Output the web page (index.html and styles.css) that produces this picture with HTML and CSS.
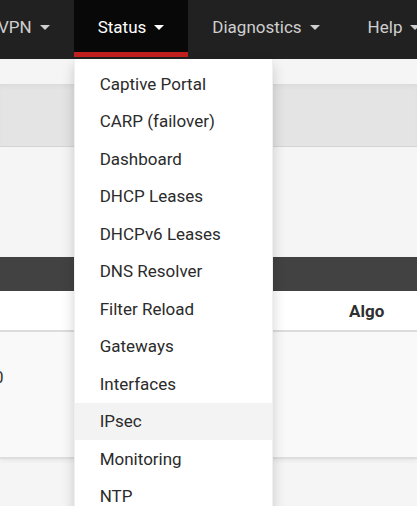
FILE: index.html
```html
<!DOCTYPE html>
<html lang="en">
<head>
<meta charset="utf-8">
<title>Status</title>
<link rel="stylesheet" href="styles.css">
</head>
<body>
<nav class="navbar">
  <ul class="nav">
    <li class="nav-item"><a class="nav-link">VPN<span class="caret"></span></a></li>
    <li class="nav-item active">
      <a class="nav-link">Status<span class="caret"></span></a>
      <ul class="dropdown">
        <li><a>Captive Portal</a></li>
        <li><a>CARP (failover)</a></li>
        <li><a>Dashboard</a></li>
        <li><a>DHCP Leases</a></li>
        <li><a>DHCPv6 Leases</a></li>
        <li><a>DNS Resolver</a></li>
        <li><a>Filter Reload</a></li>
        <li><a>Gateways</a></li>
        <li><a>Interfaces</a></li>
        <li class="hover"><a>IPsec</a></li>
        <li><a>Monitoring</a></li>
        <li><a>NTP</a></li>
      </ul>
    </li>
    <li class="nav-item"><a class="nav-link">Diagnostics<span class="caret"></span></a></li>
    <li class="nav-item"><a class="nav-link">Help<span class="caret"></span></a></li>
  </ul>
</nav>
<main class="content">
  <div class="breadcrumb"></div>
  <section class="panel">
    <div class="panel-heading"></div>
    <div class="table-head">
      <span class="cell-first"></span>
      <span class="cell-algo">Algo</span>
    </div>
    <div class="table-row">
      <span class="cell-first">0</span>
    </div>
  </section>
</main>
</body>
</html>
```

FILE: styles.css
```css
* { box-sizing: border-box; }
html, body { margin: 0; padding: 0; }
body {
  background: #f5f5f5;
  font-family: Roboto, "Liberation Sans", sans-serif;
  font-size: 17px;
  color: #333;
  width: 417px;
  height: 506px;
  overflow: hidden;
}
.navbar {
  background: #212121;
  height: 59px;
  position: relative;
  z-index: 10;
}
.nav {
  list-style: none;
  margin: 0 0 0 -26px;
  padding: 0;
  display: flex;
  white-space: nowrap;
}
.nav-item { position: relative; }
.nav-link {
  display: flex;
  align-items: center;
  height: 57px;
  padding: 2px 24px 0;
  color: #cfcfcf;
  border-bottom: 5px solid transparent;
}
.nav-item.active .nav-link {
  background: #080808;
  color: #fff;
  border-bottom-color: #c1201e;
}
.caret {
  display: inline-block;
  width: 0; height: 0;
  margin-left: 8px;
  border-top: 5px solid currentColor;
  border-left: 5px solid transparent;
  border-right: 5px solid transparent;
  margin-top: 1px;
}
.dropdown {
  position: absolute;
  top: 59px;
  left: 0;
  width: 199px;
  margin: 0;
  padding: 6px 0 0;
  list-style: none;
  background: #fff;
  box-shadow: 0 6px 12px rgba(0,0,0,.18);
  border: 1px solid rgba(0,0,0,.06);
  border-top: 0;
}
.dropdown li a {
  display: block;
  padding: 6.5px 25px;
  line-height: 24.5px;
  color: #2b2b2b;
}
.dropdown li.hover a { background: #f3f3f3; }

.content {
  padding-top: 25px;
}
.breadcrumb {
  height: 63px;
  background: #e4e4e4;
  border-bottom: 1px solid #d4d4d4;
  box-shadow: inset 0 4px 6px -3px rgba(0,0,0,.06);
}
.panel {
  margin-top: 110px;
  box-shadow: 0 2px 4px rgba(0,0,0,.06);
}
.panel-heading {
  height: 34px;
  background: #424242;
}
.table-head {
  height: 41px;
  background: #fff;
  border-bottom: 2px solid #dcdcdc;
  display: flex;
  align-items: center;
}
.cell-first { width: 349px; }
.cell-algo { font-weight: 700; color: #2f2f2f; }
.table-row {
  height: 127px;
  background: #f9f9f9;
  border-bottom: 2px solid #dedede;
  display: flex;
  align-items: flex-start;
  padding-top: 35px;
}
.table-row .cell-first {
  margin-left: -6px;
  color: #333;
}
```
